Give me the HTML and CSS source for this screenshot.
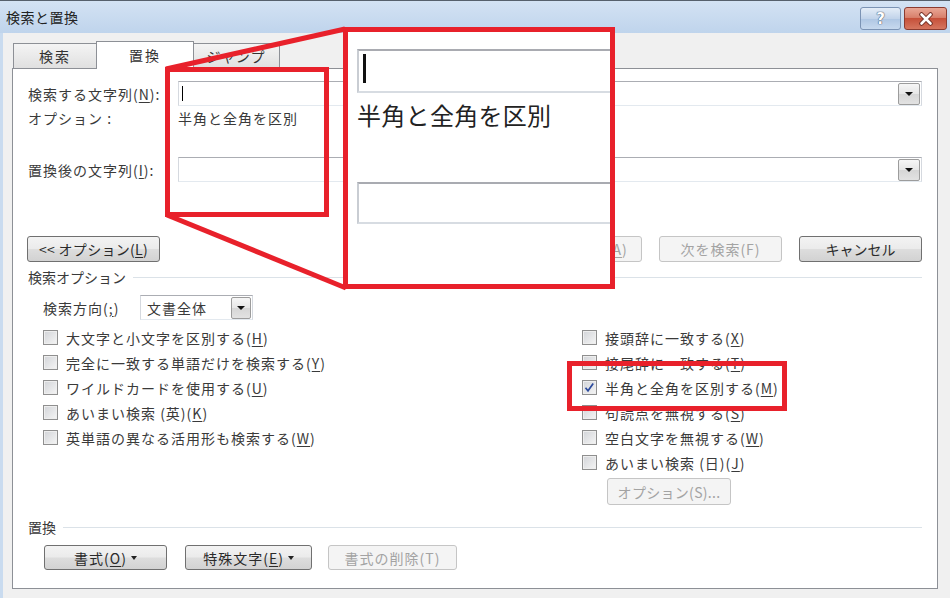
FILE: index.html
```html
<!DOCTYPE html>
<html lang="ja">
<head>
  <meta charset="UTF-8" />
  <title>検索と置換</title>
  <link rel="stylesheet" href="styles.css">
</head>
<body>
  <div class="window">
    <div class="titlebar">
      <span class="title">検索と置換</span>
      <div class="caption">
        <span class="cap-btn cap-help">?</span>
        <span class="cap-btn cap-close">
          <svg width="18" height="14" viewBox="0 0 18 14">
            <path d="M4.5 2.5 L13.5 11.5 M13.5 2.5 L4.5 11.5" stroke="#6b2a20" stroke-width="4.5" stroke-linecap="round"/>
            <path d="M4.5 2.5 L13.5 11.5 M13.5 2.5 L4.5 11.5" stroke="#fff" stroke-width="2.6" stroke-linecap="round"/>
          </svg>
        </span>
      </div>
    </div>

    <div class="client">
      <div class="tabs">
        <div class="tab tab-find">検索</div>
        <div class="tab tab-replace active">置換</div>
        <div class="tab tab-jump">ジャンプ</div>
      </div>

      <div class="panel">
        <div class="field-row">
          <label class="field-label">検索する文字列(<u>N</u>):</label>
          <div class="combo">
            <span class="caret"></span>
            <span class="drop"><span class="arrow"></span></span>
          </div>
        </div>
        <div class="option-row">
          <span class="field-label">オプション :</span>
          <span class="option-value">半角と全角を区別</span>
        </div>
        <div class="field-row replace-field">
          <label class="field-label">置換後の文字列(<u>I</u>):</label>
          <div class="combo">
            <span class="drop"><span class="arrow"></span></span>
          </div>
        </div>

        <div class="button-row">
          <button type="button" class="btn"><span>&lt;&lt; オプション(<u>L</u>)</span></button>
          <div class="button-group">
            <button type="button" class="btn"><span>置換(<u>R</u>)</span></button>
            <button type="button" class="btn disabled"><span>すべて置換(<u>A</u>)</span></button>
            <button type="button" class="btn disabled">次を検索(F)</button>
            <button type="button" class="btn btn-cancel">キャンセル</button>
          </div>
        </div>

        <div class="group-title"><span>検索オプション</span><span class="rule"></span></div>

        <div class="direction-row">
          <span class="direction-label">検索方向(<u>;</u>)</span>
          <div class="select">
            <span class="select-value">文書全体</span>
            <span class="drop"><span class="arrow"></span></span>
          </div>
        </div>

        <div class="options-grid">
          <div class="option-col">
            <label class="check"><span class="box"></span><span>大文字と小文字を区別する(<u>H</u>)</span></label>
            <label class="check"><span class="box"></span><span>完全に一致する単語だけを検索する(<u>Y</u>)</span></label>
            <label class="check"><span class="box"></span><span>ワイルドカードを使用する(<u>U</u>)</span></label>
            <label class="check"><span class="box"></span><span>あいまい検索 (英)(<u>K</u>)</span></label>
            <label class="check"><span class="box"></span><span>英単語の異なる活用形も検索する(<u>W</u>)</span></label>
          </div>
          <div class="option-col">
            <label class="check"><span class="box"></span><span>接頭辞に一致する(<u>X</u>)</span></label>
            <label class="check"><span class="box"></span><span>接尾辞に一致する(<u>T</u>)</span></label>
            <label class="check"><span class="box checked"><svg width="13" height="13" viewBox="0 0 13 13"><path d="M2.5 6.8 L5 9.8 L10.2 2.6" fill="none" stroke="#2b4a9c" stroke-width="1.7"/></svg></span><span>半角と全角を区別する(<u>M</u>)</span></label>
            <label class="check"><span class="box"></span><span>句読点を無視する(<u>S</u>)</span></label>
            <label class="check"><span class="box"></span><span>空白文字を無視する(<u>W</u>)</span></label>
            <label class="check"><span class="box"></span><span>あいまい検索 (日)(<u>J</u>)</span></label>
            <button type="button" class="btn disabled sub-option">オプション(S)...</button>
          </div>
        </div>

        <div class="group-title replace-title"><span>置換</span><span class="rule"></span></div>

        <div class="format-row">
          <button type="button" class="btn btn-format"><span>書式(<u>O</u>)</span><span class="menu-arrow"></span></button>
          <button type="button" class="btn btn-special"><span>特殊文字(<u>E</u>)</span><span class="menu-arrow"></span></button>
          <button type="button" class="btn disabled btn-clear">書式の削除(T)</button>
        </div>
      </div>
    </div>

    <!-- magnified view of the search field -->
    <div class="callout">
      <div class="callout-input"><span class="callout-caret"></span></div>
      <div class="callout-text">半角と全角を区別</div>
      <div class="callout-input callout-second"></div>
    </div>

    <svg class="annotations" width="950" height="598" viewBox="0 0 950 598">
      <line x1="166" y1="69" x2="345" y2="29"/>
      <line x1="167" y1="215" x2="346" y2="288"/>
      <rect x="167.5" y="69.5" width="159" height="145"/>
      <rect x="569.5" y="363.5" width="215" height="45"/>
    </svg>
  </div>
</body>
</html>
```

FILE: styles.css
```css
* {
  box-sizing: border-box;
  margin: 0;
  padding: 0;
}

body {
  width: 950px;
  height: 598px;
  overflow: hidden;
  background: #f0f0f0;
  font-family: "Noto Sans CJK JP", "Noto Sans", sans-serif;
  font-size: 14px;
  letter-spacing: 1px;
  color: #3a3a3a;
}

u {
  text-decoration: underline;
  text-underline-offset: 2px;
}

.window {
  position: relative;
  width: 950px;
  height: 598px;
  display: flex;
  flex-direction: column;
}

/* title bar */
.titlebar {
  height: 33px;
  flex: none;
  display: flex;
  align-items: center;
  justify-content: space-between;
  padding: 0 3px 0 6px;
  border-top: 1px solid #56606c;
  background: linear-gradient(#d3e2f3, #bfd4ec);
}

.title {
  font-size: 14px;
  line-height: 20px;
  letter-spacing: 0.5px;
  color: #222;
}

.caption {
  display: flex;
  gap: 3px;
  align-self: flex-start;
  margin-top: 6px;
}

.cap-btn {
  height: 23px;
  display: flex;
  align-items: center;
  justify-content: center;
  border-radius: 3px;
}

.cap-help {
  width: 41px;
  border: 1px solid #7b93b4;
  background: linear-gradient(#e4edf7, #c2d4ea 50%, #aec6e3 51%, #c7d9ee);
  color: #fff;
  font-family: "DejaVu Sans", sans-serif;
  font-weight: bold;
  font-size: 15px;
  letter-spacing: 0;
  text-shadow: 0 0 1px #4d5f78, 0 0 1px #4d5f78, 0 0 1px #4d5f78;
}

.cap-close {
  width: 43px;
  border: 1px solid #8b3b30;
  background: linear-gradient(#e9a796, #d8806c 45%, #c6503a 50%, #d5765f);
}

/* client area */
.client {
  flex: 1;
  display: flex;
  flex-direction: column;
  padding: 0 12px 0 9px;
  border-left: 3px solid #c9dbef;
}

.tabs {
  height: 35px;
  flex: none;
  display: flex;
  align-items: flex-end;
  padding-left: 1px;
}

.tab {
  height: 25px;
  display: flex;
  align-items: center;
  justify-content: center;
  border: 1px solid #8d9096;
  border-bottom: none;
  background: linear-gradient(#f4f4f4, #e0e0e0);
  color: #333;
  line-height: 18px;
  letter-spacing: 2px;
}

.tab-find {
  width: 84px;
}

.tab-replace {
  width: 98px;
  margin-left: -1px;
}

.tab-jump {
  width: 87px;
  margin-left: -1px;
  border-left: none;
  letter-spacing: 1px;
}

.tab.active {
  height: 28px;
  margin-bottom: -1px;
  background: #fff;
  position: relative;
  z-index: 1;
  padding-bottom: 2px;
}

.panel {
  height: 521px;
  flex: none;
  display: flex;
  flex-direction: column;
  padding: 12px 15px 0 15px;
  background: #fff;
  border: 1px solid #8d9096;
}

/* find / replace fields */
.field-row {
  height: 25px;
  display: flex;
  align-items: center;
}

.field-label {
  width: 150px;
  flex: none;
  line-height: 18px;
}

.combo {
  flex: 1;
  height: 25px;
  display: flex;
  align-items: center;
  padding: 0 1px 0 3px;
  background: #fff;
  border: 1px solid;
  border-color: #abadb3 #d5d9df #e3e9ef #d5d9df;
}

.caret {
  width: 1px;
  height: 15px;
  background: #000;
}

.drop {
  margin-left: auto;
  width: 22px;
  height: 22px;
  display: flex;
  align-items: center;
  justify-content: center;
  border: 1px solid #9c9c9c;
  border-radius: 2px;
  background: linear-gradient(#f6f6f6, #e6e6e6 50%, #d6d6d6 51%, #e2e2e2);
}

.arrow {
  width: 0;
  height: 0;
  border-left: 4px solid transparent;
  border-right: 4px solid transparent;
  border-top: 4px solid #111;
}

.option-row {
  height: 24px;
  display: flex;
  align-items: center;
}

.option-value {
  line-height: 18px;
}

.replace-field {
  margin-top: 27px;
}

/* command buttons */
.button-row {
  margin-top: 54px;
  display: flex;
  justify-content: space-between;
}

.button-group {
  display: flex;
  gap: 17px;
}

.btn {
  width: 123px;
  height: 26px;
  display: flex;
  align-items: center;
  justify-content: center;
  border: 1px solid #707070;
  border-radius: 3px;
  background: linear-gradient(#f3f3f3, #ebebeb 48%, #dddddd 52%, #d2d2d2);
  font: inherit;
  line-height: 18px;
  letter-spacing: 1px;
  color: #2a2a2a;
}

.btn-cancel {
  letter-spacing: 0;
}

.button-row > .btn {
  width: 133px;
  margin-left: -1px;
  letter-spacing: 0.3px;
}

.btn.disabled {
  border-color: #c5c5c5;
  background: #f4f4f4;
  color: #a3a3a3;
}

/* groups */
.group-title {
  margin-top: 3px;
  height: 24px;
  display: flex;
  align-items: center;
  line-height: 18px;
  letter-spacing: 0;
}

.rule {
  flex: 1;
  height: 1px;
  margin: 1px 0 0 7px;
  background: #dbe2e8;
}

.direction-row {
  margin-top: 6px;
  padding-left: 15px;
  height: 25px;
  display: flex;
  align-items: center;
}

.direction-label {
  width: 97px;
  line-height: 18px;
}

.select {
  width: 113px;
  height: 25px;
  display: flex;
  align-items: center;
  padding: 0 1px 0 6px;
  border: 1px solid;
  border-color: #abadb3 #d5d9df #e3e9ef #d5d9df;
  background: #fff;
}

.select .drop {
  width: 20px;
}

.select-value {
  line-height: 18px;
}

/* check box options */
.options-grid {
  margin-top: 5px;
  padding-left: 15px;
  display: grid;
  grid-template-columns: 539px 1fr;
}

.option-col {
  display: flex;
  flex-direction: column;
}

.check {
  height: 25px;
  display: flex;
  align-items: center;
  gap: 8px;
  line-height: 18px;
  white-space: nowrap;
}

.box {
  width: 15px;
  height: 15px;
  flex: none;
  display: flex;
  align-items: center;
  justify-content: center;
  border: 1px solid #8f8f8f;
  background: linear-gradient(135deg, #d2d4d8, #f5f5f5);
  box-shadow: inset 0 0 0 1px #eeeeee;
}

.sub-option {
  width: 124px;
  height: 27px;
  margin: 3px 0 0 25px;
  letter-spacing: 0.3px;
}

.replace-title {
  margin-top: 10px;
}

.format-row {
  margin-top: 6px;
  padding-left: 16px;
  display: flex;
}

.format-row .btn {
  height: 25px;
}

.btn-format {
  width: 123px;
}

.btn-special {
  width: 127px;
  margin-left: 18px;
}

.btn-clear {
  width: 129px;
  margin-left: 16px;
}

.menu-arrow {
  width: 0;
  height: 0;
  margin-left: 4px;
  border-left: 3.5px solid transparent;
  border-right: 3.5px solid transparent;
  border-top: 4px solid #222;
}

/* annotation overlay */
.callout {
  position: absolute;
  left: 343px;
  top: 27px;
  width: 272px;
  height: 262px;
  padding: 17px 0 0 9px;
  border: 5px solid #e8212b;
  background: #fff;
  overflow: hidden;
  z-index: 3;
  letter-spacing: 0;
}

.callout-input {
  width: 300px;
  height: 44px;
  padding: 3px 0 0 4px;
  border: 2px solid;
  border-color: #a9abb1 #c9cdd3 #d7dce2 #c9cdd3;
}

.callout-caret {
  display: block;
  width: 3px;
  height: 29px;
  background: #111;
}

.callout-text {
  margin-top: 7px;
  height: 30px;
  font-size: 24px;
  line-height: 30px;
  letter-spacing: 0.3px;
  color: #222;
}

.callout-second {
  height: 42px;
  margin-top: 52px;
}

.annotations {
  position: absolute;
  left: 0;
  top: 0;
  z-index: 4;
  pointer-events: none;
  fill: none;
  stroke: #e8212b;
  stroke-width: 5;
}
```
